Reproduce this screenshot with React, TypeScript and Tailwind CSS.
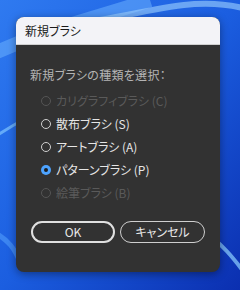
const options = [
  { label: 'カリグラフィブラシ (C)', disabled: true, checked: false },
  { label: '散布ブラシ (S)', disabled: false, checked: false },
  { label: 'アートブラシ (A)', disabled: false, checked: false },
  { label: 'パターンブラシ (P)', disabled: false, checked: true },
  { label: '絵筆ブラシ (B)', disabled: true, checked: false },
];

const Radio = ({ checked, disabled }: { checked: boolean; disabled: boolean }) => {
  if (checked) {
    return (
      <span className="w-[10px] h-[10px] rounded-full bg-[#4da3ff] flex items-center justify-center shrink-0">
        <span className="w-[4px] h-[4px] rounded-full bg-[#1e1e1e]"></span>
      </span>
    );
  }
  return (
    <span
      className={`w-[10px] h-[10px] rounded-full border-[1.5px] shrink-0 ${
        disabled ? 'border-[#555555]' : 'border-[#d0d0d0]'
      }`}
    ></span>
  );
};

export default function App() {
  return (
    <div
      className="relative w-[240px] h-[290px] overflow-hidden bg-[#1746c8] [font-family:'Noto_Sans_CJK_JP','Noto_Sans',sans-serif] [font-feature-settings:'palt']"
    >
      {/* wallpaper */}
      <svg className="absolute inset-0" width="240" height="290" viewBox="0 0 240 290">
        <defs>
          <linearGradient id="bg" x1="0" y1="0" x2="1" y2="1">
            <stop offset="0" stopColor="#2f7af0" />
            <stop offset="0.5" stopColor="#1b5ee0" />
            <stop offset="1" stopColor="#0b2fb0" />
          </linearGradient>
        </defs>
        <rect width="240" height="290" fill="url(#bg)" />
        <path d="M-20 60 C 40 30, 90 20, 150 0" stroke="#6fb6ff" strokeWidth="14" fill="none" opacity="0.5" />
        <path d="M100 20 C 160 10, 200 -5, 250 10" stroke="#9fd2ff" strokeWidth="6" fill="none" opacity="0.6" />
        <path d="M-10 140 C 20 120, 40 110, 60 100" stroke="#7fc4ff" strokeWidth="3" fill="none" opacity="0.7" />
        <path d="M200 230 C 220 240, 235 260, 250 280" stroke="#8fd0ff" strokeWidth="4" fill="none" opacity="0.7" />
        <path d="M-10 230 C 10 240, 15 250, 20 262" stroke="#5aa8ff" strokeWidth="5" fill="none" opacity="0.5" />
      </svg>

      <div className="relative ml-[16px] mt-[17px] w-[204px] h-[255px] rounded-[8px] overflow-hidden bg-[#323232] shadow-[0_2px_8px_rgba(0,0,0,0.4)] flex flex-col">
        <div className="h-[28px] bg-[#f3f3f7] flex items-center px-[9px] text-[12px] text-[#1a1a1a] border-b border-[#d0d0d0]">
          新規ブラシ
        </div>

        <div className="flex flex-col pl-[14px] pt-[22px]">
          <div className="h-[16px] flex items-center text-[12px] text-[#b4b4b4] tracking-[0.3px]">
            新規ブラシの種類を選択：
          </div>

          <div className="flex flex-col mt-[6px] pl-[11px]">
            {options.map((o) => (
              <div key={o.label} className="h-[23px] flex items-center gap-[5px]">
                <Radio checked={o.checked} disabled={o.disabled} />
                <span
                  className={`text-[12px] ${o.disabled ? 'text-[#5a5a5a]' : 'text-[#e6e6e6]'}`}
                >
                  {o.label}
                </span>
              </div>
            ))}
          </div>
        </div>

        <div className="flex gap-[5px] px-[15px] mt-[17px]">
          <button className="w-[84px] h-[22px] rounded-full border-2 border-[#e0e0e0] text-[12px] text-[#e8e8e8] flex items-center justify-center">
            OK
          </button>
          <button className="w-[85px] h-[22px] rounded-full border-[1.5px] border-[#cfcfcf] text-[12px] text-[#e8e8e8] flex items-center justify-center">
            キャンセル
          </button>
        </div>
      </div>
    </div>
  );
}
